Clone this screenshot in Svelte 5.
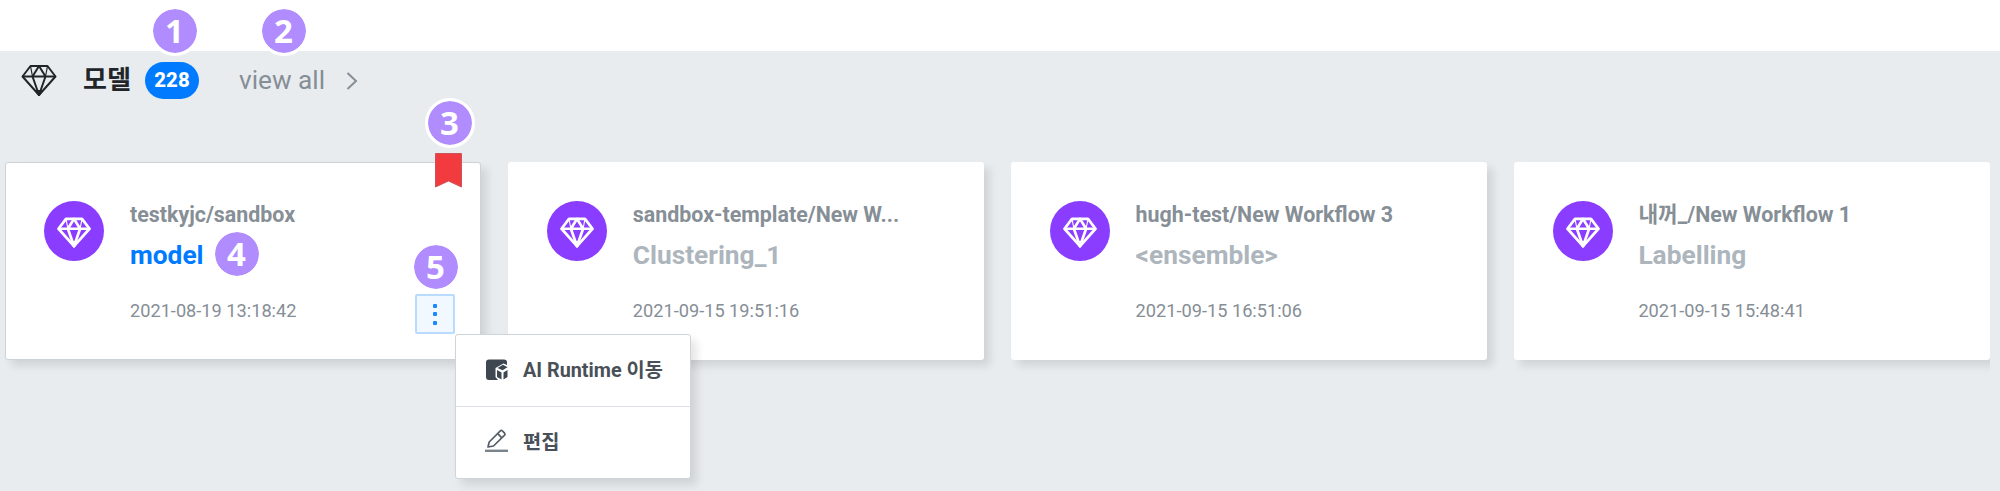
<script>
  const cards = [
    { path: 'testkyjc/sandbox', name: 'model', date: '2021-08-19 13:18:42', active: true },
    { path: 'sandbox-template/New W...', name: 'Clustering_1', date: '2021-09-15 19:51:16' },
    { path: 'hugh-test/New Workflow 3', name: '<ensemble>', date: '2021-09-15 16:51:06' },
    { path: '내꺼_/New Workflow 1', name: 'Labelling', date: '2021-09-15 15:48:41' }
  ];
  const pins = [
    { n: 1, x: 175, y: 31 },
    { n: 2, x: 284, y: 31 },
    { n: 3, x: 450, y: 123 },
    { n: 4, x: 237, y: 254 },
    { n: 5, x: 436, y: 267 }
  ];
</script>

{#snippet gem(cls)}
  <svg class={cls} viewBox="0 0 36 33" fill="none" stroke="currentColor" stroke-linejoin="round">
    <path d="M9.5 2H26.500L34.500 12.500L18 31L1.500 12.500Z" />
    <path d="M1.500 12.500H34.500M18 2L11.500 12.500L18 31L24.500 12.500Z" />
    <path d="M9.500 2L11.500 12.500M26.500 2L24.500 12.500" stroke-width="1.2" />
    <path d="M15.500 27L18 31L20.500 27Z" fill="currentColor" />
  </svg>
{/snippet}

<main>
  <header>
    {@render gem('title-gem')}
    <h1>모델</h1>
    <span class="count">228</span>
    <a class="all">view all
      <svg width="12" height="18" viewBox="0 0 12 18" fill="none" stroke="currentColor" stroke-width="2"><path d="M1.500 1L10 9L1.500 17" /></svg>
    </a>
  </header>

  <section class="cards">
    {#each cards as card}
      <article class:active={card.active}>
        <span class="avatar">{@render gem('card-gem')}</span>
        <div class="info">
          <p class="path">{card.path}</p>
          <h2>{card.name}</h2>
          <time>{card.date}</time>
        </div>
        {#if card.active}
          <svg class="bookmark" width="27" height="35" viewBox="0 0 27 35"><path d="M.5 .5H26.500V34L13.500 28L.5 34Z" fill="#f23b3e" stroke="#c9555a" stroke-width="1" /></svg>
          <button class="more" aria-label="more"><i></i><i></i><i></i></button>
        {/if}
      </article>
    {/each}
  </section>

  <div class="menu">
    <div class="item">
      <svg width="24" height="22" viewBox="0 0 24 22">
        <path d="M4 .5H19Q22 .5 22 3.500V6L18.500 4.500L10.500 9V18L13 21H4Q1 21 1 18V3.500Q1 .5 4 .5Z" fill="#3e474f" />
        <path d="M12.500 9L18 5.800L22.500 8.200L17.500 11.300Z" fill="#3e474f" />
        <path d="M12 11L16.500 13.500V20.500L12 18Z" fill="#3e474f" />
        <path d="M18.500 13.500L22.500 11V18L18.500 20.500Z" fill="#3e474f" />
      </svg>
      AI Runtime 이동
    </div>
    <div class="item edit">
      <svg width="24" height="24" viewBox="0 0 24 24" fill="none" stroke="#555e66" stroke-width="1.7">
        <path d="M3 18L4.200 13L15.300 1.800Q16.300 .8 17.300 1.800L19.600 4.200Q20.500 5.200 19.600 6.200L8.500 17Z" stroke-linejoin="round" />
        <path d="M12.700 4.600L16.900 8.900" />
        <path d="M0 21.800H23" stroke="#7b838b" stroke-width="2.400" />
      </svg>
      편집
    </div>
  </div>

  {#each pins as pin}
    <span class="pin" style="left:{pin.x}px;top:{pin.y}px">{pin.n}</span>
  {/each}
</main>

<style>
  :global(body) { margin: 0; background: #fff; }
  main {
    position: relative;
    box-sizing: border-box;
    height: 491px;
    overflow: hidden;
    padding-top: 51px;
    background: linear-gradient(#fff 51px, #e8ecef 51px);
    font-family: Roboto, 'Noto Sans CJK KR', sans-serif;
  }
  header { display: flex; align-items: center; height: 58px; padding-left: 21px; }
  :global(.title-gem) { width: 36px; height: 33px; color: #212529; stroke-width: 2; }
  h1 { margin: 0 0 0 26px; width: 50px; font-size: 26px; line-height: 30px; font-weight: 700; color: #212529; white-space: nowrap; }
  .count {
    margin: 1px 0 0 12px; width: 54px; height: 37px; border-radius: 19px;
    background: #007bff; color: #fff; font-size: 20.4px; font-weight: 800; line-height: 37px; text-align: center;
  }
  .all { display: flex; align-items: center; gap: 21px; margin: -1px 0 0 40px; color: #868e96; font-size: 26.200px; line-height: 30px; }
  .all svg { margin-top: 3px; }
  .cards {
    display: grid; grid-template-columns: repeat(4, 476.500px); gap: 26.300px;
    width: 1990px; height: 280px; box-sizing: border-box; padding: 53px 0 0 5.200px; overflow: hidden;
  }
  article {
    position: relative; display: flex; box-sizing: border-box; height: 198px; padding: 39px 0 0 39.300px;
    background: #fff; border-radius: 3px; box-shadow: 6px 6px 8px rgba(0, 0, 0, .1);
  }
  article.active { width: 476px; padding: 38px 0 0 38.300px; border: 1px solid #cbd2d8; }
  .avatar {
    display: grid; place-items: center; box-sizing: border-box; width: 60px; height: 60px;
    border-radius: 50%; background: #8b3dff; color: #fff;
  }
  :global(.card-gem) { width: 34px; height: 31px; margin-top: 2px; stroke-width: 2.900; }
  .info { margin-left: 25.500px; white-space: nowrap; }
  .path { margin: 1px 0 0; font-size: 21.400px; line-height: 26px; font-weight: 700; color: #868e96; }
  h2 { margin: 12px 0 0; font-size: 26.300px; line-height: 30px; font-weight: 700; color: #adb5bd; }
  .active h2 { color: #007bff; }
  time { display: block; margin-top: 29px; font-size: 18.200px; line-height: 24px; color: #868e96; }
  .bookmark { position: absolute; left: 429px; top: -10px; }
  .more {
    position: absolute; left: 409px; top: 131px; width: 40px; height: 40px; box-sizing: border-box; padding: 0;
    display: flex; flex-direction: column; align-items: center; justify-content: center; gap: 4.500px;
    border: 2px solid #b9dbff; border-radius: 2px; background: #f2f8ff;
  }
  .more i { width: 4px; height: 4px; border-radius: 1px; background: #1a88ff; }
  .menu {
    position: absolute; left: 455px; top: 334px; width: 236px; height: 145px; box-sizing: border-box;
    border: 1.500px solid #ced4da; border-radius: 3px; background: #fff; box-shadow: 6px 6px 8px rgba(0, 0, 0, .1);
  }
  .item {
    display: flex; align-items: center; gap: 14px; box-sizing: border-box; height: 71px; padding: 0 0 4px 29px;
    color: #495057; font-size: 19.800px; font-weight: 700; white-space: nowrap;
  }
  .item svg { margin-top: 2px; }
  .item.edit { border-top: 1.500px solid #dee2e6; padding-bottom: 3px; }
  .item.edit svg { margin-top: 0; }
  .pin {
    position: absolute; width: 44px; height: 44px; margin: -25px 0 0 -25px; border: 3px solid #fff; border-radius: 50%;
    background: #b18cff; background-clip: padding-box; color: #fff; font: 700 33px/43px 'Noto Sans', sans-serif; text-align: center; text-indent: -1px;
  }
</style>
